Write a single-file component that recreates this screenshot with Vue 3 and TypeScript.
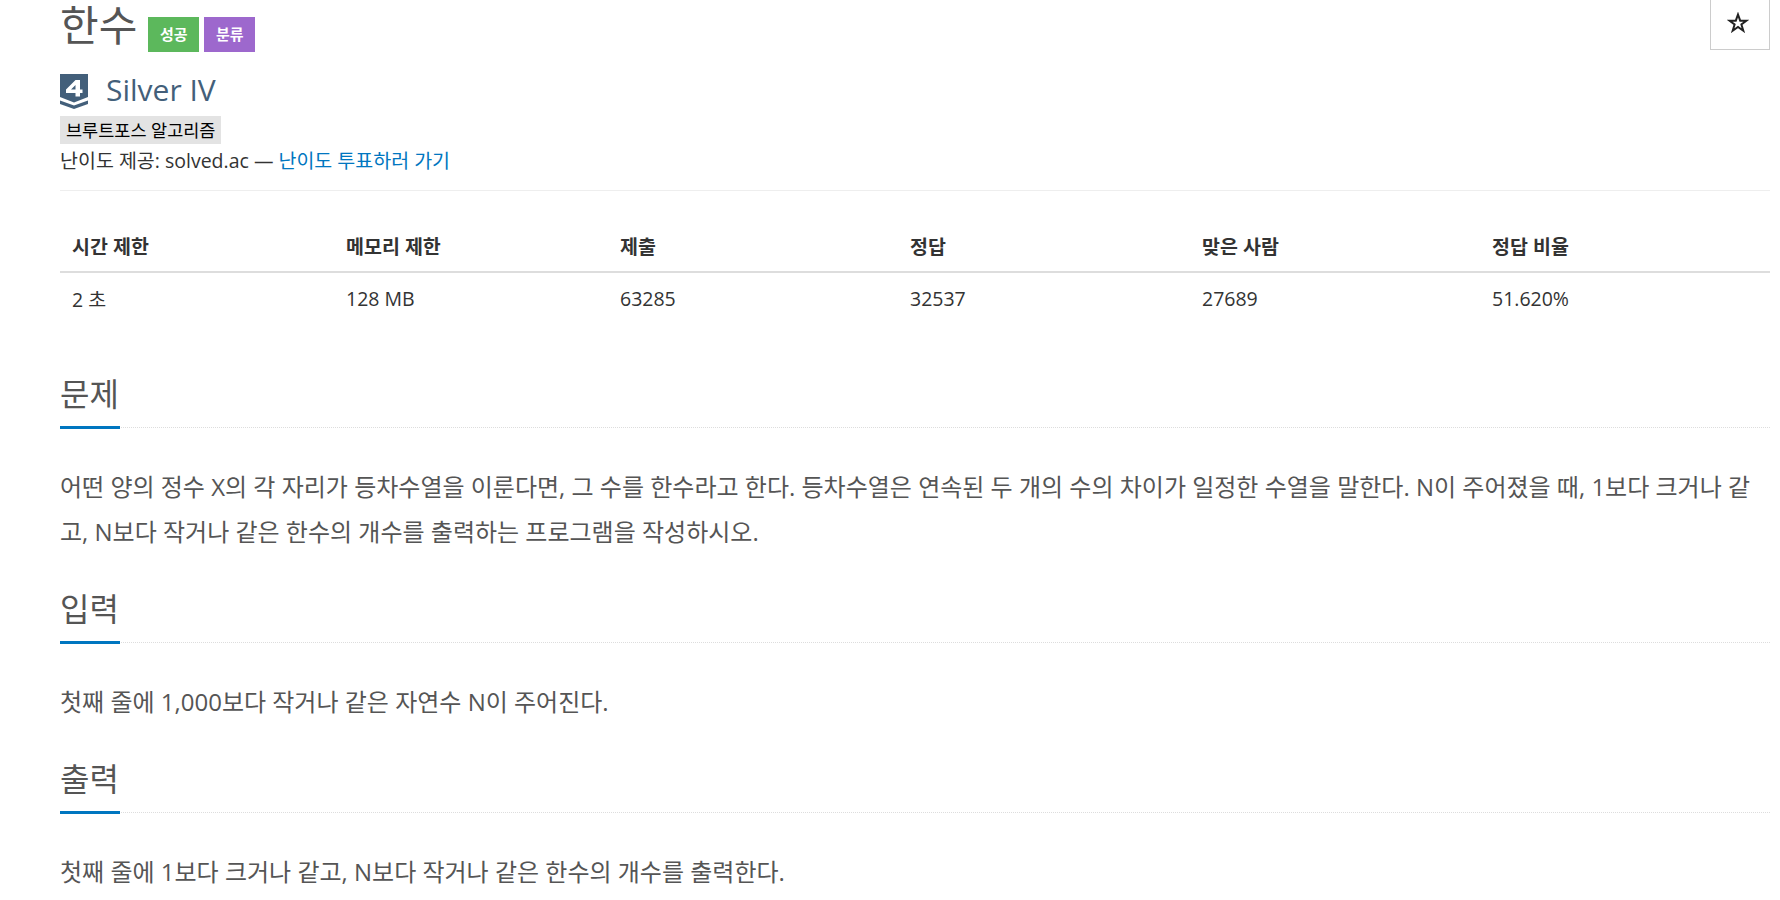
<template>
  <div class="page">
    <div class="page-header">
      <div class="title-row">
        <span class="title">한수</span>
        <span class="label label-green">성공</span>
        <span class="label label-purple">분류</span>
      </div>
      <button class="star-btn" type="button" aria-label="즐겨찾기">
        <svg viewBox="0 0 22 21" width="22" height="21">
          <path
            d="M11 2.500L13.200 8.700H19.500L14.400 12.500L16.300 18.700L11 15L5.700 18.700L7.600 12.500L2.500 8.700H8.800Z"
            fill="#fff"
            stroke="#222"
            stroke-width="2"
          />
        </svg>
      </button>
    </div>

    <div class="tier-row">
      <svg class="tier-icon" viewBox="0 0 28 35" width="28" height="35">
        <path d="M0 0H28V23L14 28.500L0 23Z" fill="#435f7a" />
        <path d="M0 26.500L14 31.500L28 26.500V30L14 35L0 30Z" fill="#435f7a" />
        <path
          d="M15.500 6H20V15.500H22.500V19H20V22.500H15.500V19H6V15.500ZM15.500 11L11 15.500H15.500Z"
          fill="#fff"
        />
      </svg>
      <span class="tier-name">Silver IV</span>
    </div>
    <div class="tag-row"><span class="tag">브루트포스 알고리즘</span></div>
    <div class="credit">
      난이도 제공: solved.ac — <a class="link">난이도 투표하러 가기</a>
    </div>

    <table class="info-table">
      <colgroup>
        <col v-for="w in colWidths" :key="w.id" :style="{ width: w.px + 'px' }" />
      </colgroup>
      <thead>
        <tr>
          <th v-for="h in headers" :key="h">{{ h }}</th>
        </tr>
      </thead>
      <tbody>
        <tr>
          <td v-for="v in values" :key="v">{{ v }}</td>
        </tr>
      </tbody>
    </table>

    <section v-for="s in sections" :key="s.title" class="section">
      <div class="headline">
        <h2>{{ s.title }}</h2>
      </div>
      <p class="text">{{ s.body }}</p>
    </section>
  </div>
</template>

<script setup lang="ts">
const headers = ["시간 제한", "메모리 제한", "제출", "정답", "맞은 사람", "정답 비율"];
const values = ["2 초", "128 MB", "63285", "32537", "27689", "51.620%"];
const colWidths = [273, 274, 290, 292, 290, 291].map((px, id) => ({ id, px }));

const sections = [
  {
    title: "문제",
    body: "어떤 양의 정수 X의 각 자리가 등차수열을 이룬다면, 그 수를 한수라고 한다. 등차수열은 연속된 두 개의 수의 차이가 일정한 수열을 말한다. N이 주어졌을 때, 1보다 크거나 같고, N보다 작거나 같은 한수의 개수를 출력하는 프로그램을 작성하시오.",
  },
  { title: "입력", body: "첫째 줄에 1,000보다 작거나 같은 자연수 N이 주어진다." },
  { title: "출력", body: "첫째 줄에 1보다 크거나 같고, N보다 작거나 같은 한수의 개수를 출력한다." },
];
</script>

<style>
html,
body {
  margin: 0;
  background: #fff;
  overflow: hidden;
}
</style>

<style scoped>
.page {
  padding: 0 10px 0 60px;
  font-family: "Open Sans", "Noto Sans CJK KR", sans-serif;
  color: #333;
  font-size: 18px;
}

.page-header {
  display: flex;
  justify-content: space-between;
  align-items: flex-start;
  height: 73px;
}

.title-row {
  display: flex;
  align-items: flex-start;
}

.title {
  font-size: 42px;
  line-height: 50px;
  color: #555;
  margin-right: 11px;
}

.label {
  margin-top: 17px;
  margin-right: 5px;
  width: 51px;
  height: 35px;
  line-height: 35px;
  text-align: center;
  color: #fff;
  font-size: 15px;
  font-weight: 700;
}

.label-green {
  background: #5cb85c;
}

.label-purple {
  background: #9d68cd;
}

.star-btn {
  display: flex;
  align-items: center;
  justify-content: center;
  width: 60px;
  height: 50px;
  padding: 0 4px 4px 0;
  border: 1px solid #ccc;
  border-top: 0;
  background: #fff;
}

.tier-row {
  display: flex;
  align-items: center;
  height: 37px;
}

.tier-icon {
  margin-right: 18px;
}

.tier-name {
  font-size: 30px;
  line-height: 33px;
  padding-bottom: 4px;
  color: #435f7a;
}

.tag-row {
  margin-top: 6px;
  height: 28px;
}

.tag {
  display: inline-block;
  height: 28px;
  line-height: 28px;
  padding: 0 6px;
  background: #e3e3e3;
  color: #000;
  font-size: 17.5px;
}

.credit {
  height: 30px;
  line-height: 33px;
  font-size: 19.5px;
  padding-bottom: 16px;
  border-bottom: 1px solid #eee;
}

.link {
  color: #0076c0;
}

.info-table {
  width: 100%;
  margin-top: 28px;
  border-collapse: collapse;
  table-layout: fixed;
  font-size: 19.5px;
}

.info-table th {
  text-align: left;
  font-weight: 700;
  padding: 0 13px;
  height: 52px;
  border-bottom: 2px solid #ddd;
}

.info-table td {
  padding: 0 13px 2px;
  height: 50px;
}

.info-table th:first-child,
.info-table td:first-child {
  padding-left: 12px;
}

.headline {
  position: relative;
  height: 64px;
  border-bottom: 1px dotted #ddd;
  margin-top: 38px;
}

.section + .section .headline {
  margin-top: 0;
}

.headline::after {
  content: "";
  position: absolute;
  left: 0;
  bottom: -2px;
  width: 60px;
  height: 3px;
  background: #0076c0;
}

.headline h2 {
  margin: 0;
  padding-top: 8px;
  font-size: 32px;
  line-height: 46px;
  font-weight: 400;
  color: #555;
}

.text {
  margin: 36px 0 24px;
  line-height: 45px;
  font-size: 24px;
  color: #555;
  word-break: break-all;
}
</style>
